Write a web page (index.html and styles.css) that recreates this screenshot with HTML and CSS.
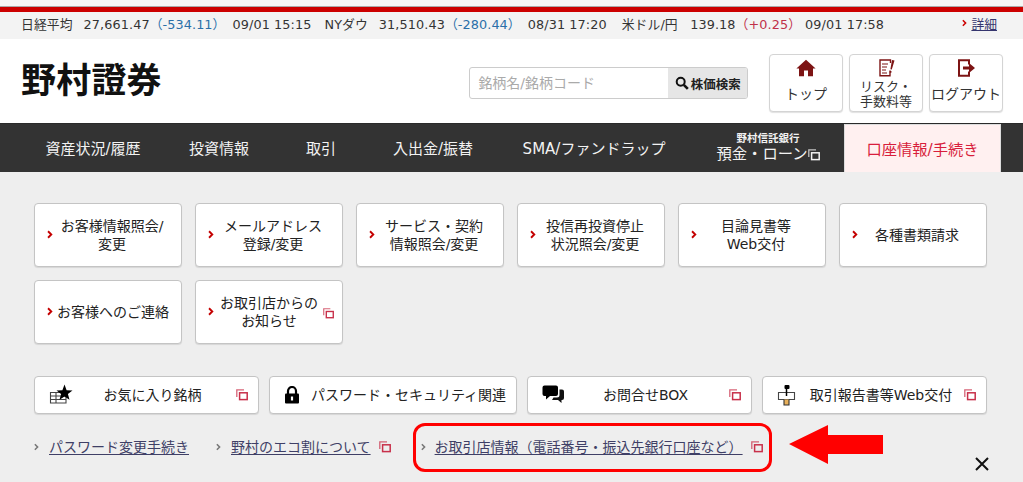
FILE: index.html
```html
<!DOCTYPE html>
<html lang="ja">
<head>
<meta charset="utf-8">
<title>野村證券</title>
<link rel="stylesheet" href="styles.css">
</head>
<body>
<svg class="defs" width="0" height="0" aria-hidden="true">
  <symbol id="win" viewBox="0 0 12 12">
    <path d="M.8 8V.8H8" fill="none" stroke="currentColor" stroke-width="1.3" opacity=".75"/>
    <rect x="3.6" y="3.8" width="7.6" height="6.8" fill="none" stroke="currentColor" stroke-width="1.5"/>
  </symbol>
  <symbol id="chev" viewBox="0 0 7 10">
    <path d="M1.2 1.2 5 5 1.2 8.800" fill="none" stroke="currentColor" stroke-width="2.200"/>
  </symbol>
</svg>
<div class="ticker-wrap">
  <div class="ticker">
    <span class="ticker-text">日経平均<i class="sp1"></i>27,661.47<span class="down">（-534.11）</span>09/01 15:15<i class="sp2"></i>NYダウ<i class="sp1"></i>31,510.43<span class="down">（-280.44）</span>08/31 17:20<i class="sp3"></i>米ドル/円<i class="sp4"></i>139.18<span class="up">（+0.25）</span>09/01 17:58</span>
    <a class="detail"><svg class="chev-s"><use href="#chev"/></svg><span>詳細</span></a>
  </div>
</div>
<header class="header">
  <div class="logo">野村證券</div>
  <div class="search">
    <div class="search-input">銘柄名/銘柄コード</div>
    <div class="search-btn">
      <svg class="search-ico" viewBox="0 0 14 14"><circle cx="5.700" cy="5.700" r="4" fill="none" stroke="#111" stroke-width="2"/><path d="M8.800 8.800 12.800 12.800" stroke="#111" stroke-width="2.600"/></svg>
      <span>株価検索</span>
    </div>
  </div>
  <div class="head-btns">
    <a class="head-btn">
      <svg class="head-ico" viewBox="0 0 20 18"><path d="M10 .8 19.600 9.400H17V17.200H12V11.600H8V17.200H3V9.400H.4Z" fill="#7d1414"/></svg>
      <span class="head-lbl">トップ</span>
    </a>
    <a class="head-btn">
      <svg class="head-ico" viewBox="0 0 20 18"><path d="M14 11.500V16.800H4V1H14.500V4" fill="none" stroke="#7d1414" stroke-width="1.400"/><path d="M6 5H12M6 8H11M6 11H10M6 14H11" stroke="#7d1414" stroke-width="1.100"/><path d="M16 1 18.500 1.600 15.800 10.600 14.400 10.200ZM14 11.800 15.600 12.200 15.200 14 13.600 13.600Z" fill="#7d1414"/></svg>
      <span class="head-lbl head-lbl-2">リスク・<br>手数料等</span>
    </a>
    <a class="head-btn">
      <svg class="head-ico" viewBox="0 0 20 18"><path d="M13 5.500V1.200H3V16.800H13V12.500" fill="none" stroke="#7d1414" stroke-width="2"/><path d="M7 7.400H13V4L19 9 13 14V10.600H7Z" fill="#7d1414"/></svg>
      <span class="head-lbl">ログアウト</span>
    </a>
  </div>
</header>
<nav class="nav">
  <a class="nav-item w1">資産状況/履歴</a>
  <a class="nav-item w2">投資情報</a>
  <a class="nav-item w3">取引</a>
  <a class="nav-item w4">入出金/振替</a>
  <a class="nav-item w5">SMA/ファンドラップ</a>
  <a class="nav-item w6 nav-stack"><small>野村信託銀行</small><span class="nav-line">預金・ローン<svg class="win-nav"><use href="#win"/></svg></span></a>
  <a class="nav-item w7 active">口座情報/手続き</a>
</nav>
<main class="main">
  <div class="cards">
    <a class="card"><svg class="chev"><use href="#chev"/></svg><span class="card-text">お客様情報照会/<br>変更</span></a>
    <a class="card"><svg class="chev"><use href="#chev"/></svg><span class="card-text">メールアドレス<br>登録/変更</span></a>
    <a class="card"><svg class="chev"><use href="#chev"/></svg><span class="card-text">サービス・契約<br>情報照会/変更</span></a>
    <a class="card"><svg class="chev"><use href="#chev"/></svg><span class="card-text">投信再投資停止<br>状況照会/変更</span></a>
    <a class="card"><svg class="chev"><use href="#chev"/></svg><span class="card-text">目論見書等<br>Web交付</span></a>
    <a class="card"><svg class="chev"><use href="#chev"/></svg><span class="card-text">各種書類請求</span></a>
    <a class="card card-tight"><svg class="chev"><use href="#chev"/></svg><span class="card-text">お客様へのご連絡</span></a>
    <a class="card card-news"><svg class="chev"><use href="#chev"/></svg><span class="card-text">お取引店からの<br>お知らせ</span><svg class="win win-card"><use href="#win"/></svg></a>
  </div>
  <div class="tools">
    <a class="tool tool-a">
      <svg class="tool-ico" viewBox="0 0 24 22"><path d="M1.500 8.500H17V19H1.500ZM1.500 12H17M1.500 15.500H17M7 8.500V19" fill="none" stroke="#444" stroke-width="1.100"/><path d="M15.500 .5 17.600 6.200 23.500 6.400 18.900 10 20.500 15.700 15.500 12.400 10.500 15.700 12.100 10 7.500 6.400 13.400 6.200Z" fill="#000"/></svg>
      <span class="tool-text">お気に入り銘柄</span><svg class="win"><use href="#win"/></svg>
    </a>
    <a class="tool tool-b">
      <svg class="tool-ico-lock" viewBox="0 0 16 18"><path d="M4 8V5a4 4 0 0 1 8 0V8" fill="none" stroke="#000" stroke-width="2.200"/><rect x="1" y="7.500" width="14" height="10" rx="1" fill="#000"/><path d="M8 10.500v4" stroke="#fff" stroke-width="2.200"/></svg>
      <span class="tool-text">パスワード・セキュリティ関連</span>
    </a>
    <a class="tool tool-a">
      <svg class="tool-ico" viewBox="0 0 24 22"><path d="M2.500 1.500H14a2 2 0 0 1 2 2V10a2 2 0 0 1-2 2H8L4 15.500V12H2.500a2 2 0 0 1-2-2V3.500a2 2 0 0 1 2-2Z" fill="#000"/><path d="M17.500 5.500H20a2 2 0 0 1 2 2V14a2 2 0 0 1-2 2H19.500V19L16 16H10L11.500 13.500H15a2.500 2.500 0 0 0 2.500-2.500Z" fill="#111"/></svg>
      <span class="tool-text">お問合せBOX</span><svg class="win"><use href="#win"/></svg>
    </a>
    <a class="tool tool-a tool-d">
      <svg class="tool-ico" viewBox="0 0 24 22"><path d="M1.500 8.500H17.500V15.500H1.500Z" fill="none" stroke="#444" stroke-width="1.100"/><path d="M7 15.500V21H12V15.500" fill="#e8b05a" stroke="#333" stroke-width="1.100"/><path d="M9.500 12V2" stroke="#000" stroke-width="1.500"/><rect x="7.500" y="1" width="5" height="4" rx="1" fill="#000"/></svg>
      <span class="tool-text">取引報告書等Web交付</span><svg class="win"><use href="#win"/></svg>
    </a>
  </div>
  <div class="links">
    <span class="link link-1"><svg class="chev-g"><use href="#chev"/></svg><a>パスワード変更手続き</a></span>
    <span class="link link-2"><svg class="chev-g"><use href="#chev"/></svg><a>野村のエコ割について</a><svg class="win"><use href="#win"/></svg></span>
    <span class="link link-3"><svg class="chev-g"><use href="#chev"/></svg><a>お取引店情報（電話番号・振込先銀行口座など）</a><svg class="win"><use href="#win"/></svg></span>
  </div>
</main>
<div class="mark-box"></div>
<svg class="mark-arrow" viewBox="0 0 94 39"><path d="M0 19 39 0V10H94V29H39V39Z" fill="#ff0000"/></svg>
<svg class="close" viewBox="0 0 14 14"><path d="M1 1 13 13M13 1 1 13" stroke="#111" stroke-width="2"/></svg>
</body>
</html>
```

FILE: styles.css
```css
* { box-sizing: border-box; }
html, body { margin: 0; padding: 0; }
body {
  width: 1023px;
  height: 482px;
  overflow: hidden;
  position: relative;
  background: #eee;
  color: #222;
  font-family: "DejaVu Sans", "Noto Sans CJK JP", sans-serif;
  font-size: 14px;
  font-weight: 400;
}
a { color: inherit; text-decoration: none; }
i { font-style: normal; }
.defs { position: absolute; }

.ticker-wrap { background: #f6f6f6; padding-top: 6px; }
.ticker {
  height: 33px;
  border-top: 1px solid #aaa;
  background: linear-gradient(#cc0000, #cc0000) top / 100% 5px no-repeat #f3f3f3;
  padding: 0 26px 0 21px;
  display: flex;
  justify-content: space-between;
  align-items: center;
  font-size: 12.800px;
  color: #333;
}
.ticker-text { white-space: nowrap; letter-spacing: .1px; }
.sp1 { display: inline-block; width: 11px; }
.sp2 { display: inline-block; width: 13px; }
.sp3 { display: inline-block; width: 15px; }
.sp4 { display: inline-block; width: 12.500px; }
.down { color: #2a6fa8; padding-right: 7px; }
.up { color: #c0304a; padding-right: 4px; }
.detail { display: flex; align-items: center; gap: 4px; color: #35356e; }
.detail span { text-decoration: underline; }
.chev-s { width: 5px; height: 8px; color: #c00; }

.header {
  height: 84px;
  background: #fff;
  display: flex;
  align-items: flex-start;
  padding-left: 21px;
  padding-right: 20px;
}
.logo {
  width: 449px;
  margin-top: 19px;
  font-size: 35px;
  line-height: 46px;
  font-weight: 700;
  color: #111;
  letter-spacing: .2px;
}
.search {
  margin-top: 28px;
  width: 279px;
  height: 32px;
  display: flex;
  border: 1px solid #ccc;
  border-radius: 3px;
  overflow: hidden;
}
.search-input {
  width: 198px;
  padding-left: 8px;
  line-height: 30px;
  color: #aaa;
  font-size: 14px;
}
.search-btn {
  flex: 1;
  background: #e6e6e6;
  display: flex;
  align-items: center;
  justify-content: center;
  gap: 2px;
  font-size: 12.500px;
  font-weight: 700;
  color: #222;
}
.search-ico { width: 14px; height: 14px; }
.head-btns { margin-left: 21px; display: flex; gap: 6px; }
.head-btn {
  margin-top: 15px;
  width: 74px;
  height: 58px;
  background: #fff;
  border: 1px solid #d4d4d4;
  border-radius: 4px;
  box-shadow: 0 1px 1px rgba(0, 0, 0, .12);
  display: flex;
  flex-direction: column;
  align-items: center;
  padding-top: 4px;
}
.head-ico { width: 20px; height: 18px; flex: none; }
.head-lbl { margin-top: 7px; font-size: 14px; line-height: 20px; color: #333; white-space: nowrap; }
.head-lbl-2 { margin-top: 2px; font-size: 13px; line-height: 15px; text-align: center; }

.nav {
  height: 49px;
  background: #333;
  display: flex;
  padding-left: 20px;
  border-top: 1px solid #2a2a2a;
}
.nav-item {
  display: flex;
  align-items: center;
  justify-content: center;
  padding-bottom: 2px;
  color: #f2f2f2;
  font-size: 15px;
  white-space: nowrap;
}
.w1 { width: 146px; }
.w2 { width: 106px; }
.w3 { width: 98px; }
.w4 { width: 126px; }
.w5 { width: 196px; }
.w6 { width: 152px; }
.w7 { width: 157px; }
.nav-stack { flex-direction: column; padding-bottom: 0; padding-top: 2px; }
.nav-stack small { font-size: 10.500px; line-height: 13px; font-weight: 700; margin-top: -2px; }
.nav-line { display: flex; align-items: center; line-height: 19px; font-size: 15.300px; }
.win-nav { width: 12px; height: 12px; color: #f2f2f2; }
.active { background: #fff0f0; color: #d81e3c; border: 1px solid #ddd; border-bottom: 0; font-size: 15.300px; }

.main { padding: 31px 36px 0 34px; }
.cards {
  display: grid;
  grid-template-columns: repeat(6, 148px);
  grid-auto-rows: 64px;
  column-gap: 13px;
  row-gap: 13px;
}
.card {
  position: relative;
  background: #fff;
  border: 1px solid #c4c4c4;
  border-radius: 4px;
  box-shadow: 0 1px 1px rgba(0, 0, 0, .1);
  display: flex;
  align-items: center;
  justify-content: center;
  padding: 0 10px 1px 18px;
  text-align: center;
  font-size: 14px;
  line-height: 18px;
  color: #222;
}
.chev { position: absolute; left: 12px; top: 26px; width: 6px; height: 9px; color: #c40000; }
.card-text { white-space: nowrap; }
.card-tight { padding: 0 0 1px 10px; }
.card-news { padding-left: 10px; }
.win { width: 12px; height: 12px; flex: none; color: #c8304a; }
.win-card { position: absolute; right: 8px; top: 27px; width: 11px; height: 11px; }

.tools { margin-top: 32px; display: flex; gap: 10px; }
.tool {
  height: 38px;
  background: #fff;
  border: 1px solid #c4c4c4;
  border-radius: 4px;
  box-shadow: 0 1px 1px rgba(0, 0, 0, .1);
  display: flex;
  align-items: center;
  font-size: 14px;
  color: #222;
  white-space: nowrap;
}
.tool-a { width: 225px; padding-left: 14px; padding-right: 10px; }
.tool-b { width: 248px; padding-left: 14px; padding-right: 9px; gap: 10px; }
.tool-a .tool-text { padding-right: 4px; padding-bottom: 2px; }
.tool-b .tool-text { padding-bottom: 2px; }
.tool-d .tool-text { padding-right: 3px; }
.tool-ico { width: 24px; height: 22px; flex: none; }
.tool-ico-lock { width: 16px; height: 18px; flex: none; }
.tool-text { flex: 1; text-align: center; }

.links {
  margin-top: 23px;
  display: flex;
  align-items: center;
  font-size: 14px;
  line-height: 20px;
  color: #333;
  white-space: nowrap;
}
.link { display: flex; align-items: center; }
.link a { color: #3f3f66; text-decoration: underline; text-underline-offset: 2px; }
.chev-g { width: 5px; height: 8px; color: #777; margin-right: 10px; }
.link .win { margin-left: 8px; }
.link-2 { margin-left: 27px; }
.link-3 { margin-left: 30px; }
.link-3 .chev-g { margin-right: 9px; }

.mark-box {
  position: absolute;
  left: 413px;
  top: 423px;
  width: 359px;
  height: 49px;
  border: 3px solid #ff0000;
  border-radius: 12px;
}
.mark-arrow { position: absolute; left: 789px; top: 425px; width: 94px; height: 39px; }
.close { position: absolute; left: 975px; top: 457px; width: 14px; height: 14px; }
```
